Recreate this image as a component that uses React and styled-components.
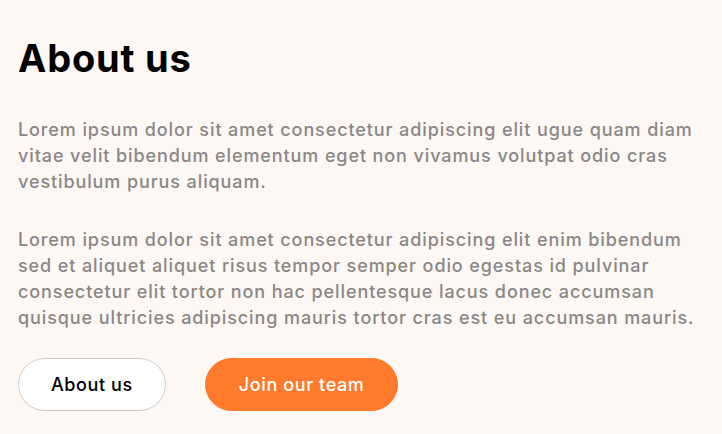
import React from "react";
import styled, { createGlobalStyle } from "styled-components";

const Global = createGlobalStyle`
  html, body { margin: 0; padding: 0; background: #fdf8f3; }
  body { font-family: Inter, "Noto Sans", sans-serif; }
`;

const Section = styled.section`
  padding: 34px 18px 24px;
  display: flex;
  flex-direction: column;
`;

const Title = styled.h1`
  margin: 0 0 35px;
  font-size: 38px;
  line-height: 48px;
  font-weight: 700;
  color: #000;
  letter-spacing: 0.8px;
`;

const Paragraph = styled.p`
  margin: 0 0 ${(p) => (p.$last ? "27px" : "32px")};
  font-size: 18px;
  line-height: 26px;
  font-weight: 500;
  color: #8a8786;
  letter-spacing: 0.9px;
  white-space: nowrap;
`;

const Actions = styled.div`
  display: flex;
  gap: 39px;
`;

const Button = styled.button`
  height: 53px;
  padding: 0 ${(p) => (p.$primary ? "33px" : "32px")};
  border-radius: 27px;
  font-family: inherit;
  font-size: 18px;
  font-weight: 500;
  letter-spacing: 0.6px;
  cursor: pointer;
  border: 1px solid ${(p) => (p.$primary ? "#ff7a2b" : "#cfcbc8")};
  background: ${(p) => (p.$primary ? "#ff7a2b" : "#ffffff")};
  color: ${(p) => (p.$primary ? "#ffffff" : "#000000")};
`;

export default function App() {
  return (
    <>
      <Global />
      <Section>
        <Title>About us</Title>
        <Paragraph>
          Lorem ipsum dolor sit amet consectetur adipiscing elit ugue quam diam
          <br />
          vitae velit bibendum elementum eget non vivamus volutpat odio cras
          <br />
          vestibulum purus aliquam.
        </Paragraph>
        <Paragraph $last>
          Lorem ipsum dolor sit amet consectetur adipiscing elit enim bibendum
          <br />
          sed et aliquet aliquet risus tempor semper odio egestas id pulvinar
          <br />
          consectetur elit tortor non hac pellentesque lacus donec accumsan
          <br />
          quisque ultricies adipiscing mauris tortor cras est eu accumsan mauris.
        </Paragraph>
        <Actions>
          <Button>About us</Button>
          <Button $primary>Join our team</Button>
        </Actions>
      </Section>
    </>
  );
}
